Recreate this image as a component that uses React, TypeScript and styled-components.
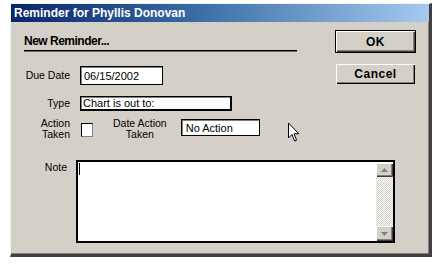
import React from "react";
import styled, { createGlobalStyle } from "styled-components";

const GlobalStyle = createGlobalStyle`
  html, body { margin: 0; padding: 0; background: #ffffff; }
  body { font-family: "Liberation Sans", Arial, sans-serif; }
`;

const Window = styled.div`
  position: relative;
  box-sizing: border-box;
  margin: 3px 0 0 10px;
  width: 422px;
  height: 254px;
  background: #d4d0c8;
  border-top: 1px solid #f4f4f4;
  border-left: 1px solid #f4f4f4;
  border-right: 3px solid #404040;
  border-bottom: 3px solid #404040;
  box-shadow: inset -1px -1px 0 #808080;
  display: flex;
  flex-direction: column;
`;

const TitleBar = styled.div`
  height: 18px;
  flex-shrink: 0;
  display: flex;
  align-items: center;
  padding-left: 3px;
  background: linear-gradient(to right, #0a246a 0%, #3a6ea5 45%, #a6caf0 100%);
  color: #ffffff;
  font-weight: bold;
  font-size: 12px;
  white-space: nowrap;
`;

const Body = styled.div`
  flex: 1;
  display: grid;
  grid-template-columns: 1fr 81px;
  grid-template-areas: "form buttons" "note note";
  grid-template-rows: auto auto;
  row-gap: 20px;
  padding: 8px 13px 11px 0;
  align-content: start;
`;

const FormArea = styled.div`
  grid-area: form;
  display: flex;
  flex-direction: column;
`;

const Heading = styled.div`
  margin: 4px 0 0 13px;
  width: 273px;
  font-size: 12px;
  font-weight: bold;
  letter-spacing: -0.5px;
  line-height: 14px;
  padding-bottom: 2px;
  border-bottom: 1px solid #000;
  box-shadow: 0 1px 0 #6a6a6a;
  color: #000;
`;

const Row = styled.div<{ $mt: number; $align?: string; $gap?: number }>`
  display: flex;
  align-items: ${(p) => p.$align ?? "center"};
  margin-top: ${(p) => p.$mt}px;
  gap: ${(p) => p.$gap ?? 0}px;
`;

const Label = styled.div<{ $w: number; $mt?: number; $mr?: number }>`
  width: ${(p) => p.$w}px;
  flex-shrink: 0;
  text-align: right;
  font-size: 10.5px;
  line-height: 11px;
  color: #000;
  margin-top: ${(p) => p.$mt ?? 0}px;
  margin-right: ${(p) => p.$mr ?? 0}px;
`;

const CenterLabel = styled.div<{ $ml: number; $mr: number }>`
  text-align: center;
  font-size: 10.5px;
  line-height: 11px;
  color: #000;
  margin-left: ${(p) => p.$ml}px;
  margin-right: ${(p) => p.$mr}px;
`;

const Field = styled.div<{ $w: number; $h: number; $pl: number; $mt?: number; $thick?: boolean }>`
  box-sizing: border-box;
  width: ${(p) => p.$w}px;
  height: ${(p) => p.$h}px;
  margin-top: ${(p) => p.$mt ?? 0}px;
  background: #fff;
  border: 1px solid #000;
  border-right-width: ${(p) => (p.$thick ? 2 : 1)}px;
  border-bottom-width: ${(p) => (p.$thick ? 2 : 1)}px;
  box-shadow: inset 1px 1px 0 #808080;
  padding-left: ${(p) => p.$pl}px;
  display: flex;
  align-items: center;
  font-size: 11px;
  color: #000;
  white-space: nowrap;
  overflow: hidden;
`;

const CheckBox = styled.div`
  box-sizing: border-box;
  width: 12px;
  height: 14px;
  margin: 5px 0 0 1px;
  background: #fff;
  border-top: 1px solid #000;
  border-left: 1px solid #000;
  border-right: 1px solid #808080;
  border-bottom: 1px solid #808080;
  flex-shrink: 0;
`;

const ButtonColumn = styled.div`
  grid-area: buttons;
  display: flex;
  flex-direction: column;
  align-items: center;
  gap: 11px;
`;

const Button = styled.div<{ $default?: boolean }>`
  box-sizing: border-box;
  display: flex;
  align-items: center;
  justify-content: center;
  font-size: 12px;
  font-weight: bold;
  letter-spacing: 0.5px;
  color: #000;
  background: #d4d0c8;
  width: ${(p) => (p.$default ? 81 : 79)}px;
  height: ${(p) => (p.$default ? 23 : 20)}px;
  border: ${(p) => (p.$default ? "1px solid #000" : "none")};
  box-shadow: inset 1px 1px 0 #ffffff, inset -1px -1px 0 ${(p) => (p.$default ? "#404040" : "#000")},
    inset -2px -2px 0 #808080;
`;

const NoteRow = styled.div`
  grid-area: note;
  display: flex;
  align-items: flex-start;
  gap: 9px;
`;

const NoteBox = styled.div`
  box-sizing: border-box;
  width: 319px;
  height: 83px;
  background: #fff;
  border: 2px solid #000;
  display: flex;
`;

const NoteText = styled.div`
  flex: 1;
  padding: 1px 0 0 1px;
`;

const Caret = styled.div`
  width: 1px;
  height: 12px;
  background: #000;
`;

const ScrollBar = styled.div`
  width: 17px;
  display: flex;
  flex-direction: column;
  padding-top: 1px;
`;

const ScrollButton = styled.div<{ $h: number }>`
  height: ${(p) => p.$h}px;
  background: #d4d0c8;
  box-shadow: inset 1px 1px 0 #ffffff, inset -1px -1px 0 #404040, inset -2px -2px 0 #808080;
  display: flex;
  align-items: center;
  justify-content: center;
  flex-shrink: 0;
`;

const Track = styled.div`
  flex: 1;
  background-color: #fff;
  background-image: repeating-conic-gradient(#d4d0c8 0 25%, #ffffff 0 50%);
  background-size: 2px 2px;
`;

const Pointer = styled.svg`
  position: absolute;
  left: 277px;
  top: 118px;
`;

const Arrow = ({ up }: { up?: boolean }) => (
  <svg width="7" height="4" viewBox="0 0 7 4">
    {up ? <path d="M3.5 0 L7 4 L0 4 Z" fill="#808080" /> : <path d="M0 0 L7 0 L3.5 4 Z" fill="#808080" />}
  </svg>
);

export default function App() {
  return (
    <>
      <GlobalStyle />
      <Window>
        <TitleBar>Reminder for Phyllis Donovan</TitleBar>
        <Body>
          <FormArea>
            <Heading>New Reminder...</Heading>
            <Row $mt={15} $gap={10}>
              <Label $w={59}>Due Date</Label>
              <Field $w={83} $h={19} $pl={3}>06/15/2002</Field>
            </Row>
            <Row $mt={11} $gap={10}>
              <Label $w={59}>Type</Label>
              <Field $w={152} $h={15} $pl={2} $thick>Chart is out to:</Field>
            </Row>
            <Row $mt={7} $align="flex-start">
              <Label $w={59} $mr={10}>
                Action
                <br />
                Taken
              </Label>
              <CheckBox />
              <CenterLabel $ml={20} $mr={14}>
                Date Action
                <br />
                Taken
              </CenterLabel>
              <Field $w={79} $h={17} $pl={4} $mt={1}>No Action</Field>
            </Row>
          </FormArea>
          <ButtonColumn>
            <Button $default>OK</Button>
            <Button>Cancel</Button>
          </ButtonColumn>
          <NoteRow>
            <Label $w={56} $mt={2}>Note</Label>
            <NoteBox>
              <NoteText>
                <Caret />
              </NoteText>
              <ScrollBar>
                <ScrollButton $h={14}>
                  <Arrow up />
                </ScrollButton>
                <Track />
                <ScrollButton $h={15}>
                  <Arrow />
                </ScrollButton>
              </ScrollBar>
            </NoteBox>
          </NoteRow>
        </Body>
        <Pointer width="12" height="21" viewBox="0 0 12 20">
          <path d="M0.5 0.5 L0.5 15.5 L4 12 L6.6 18.5 L8.6 17.7 L6 11.3 L10.8 11.3 Z" fill="#fff" stroke="#000" strokeWidth="1" strokeLinejoin="miter" />
        </Pointer>
      </Window>
    </>
  );
}
